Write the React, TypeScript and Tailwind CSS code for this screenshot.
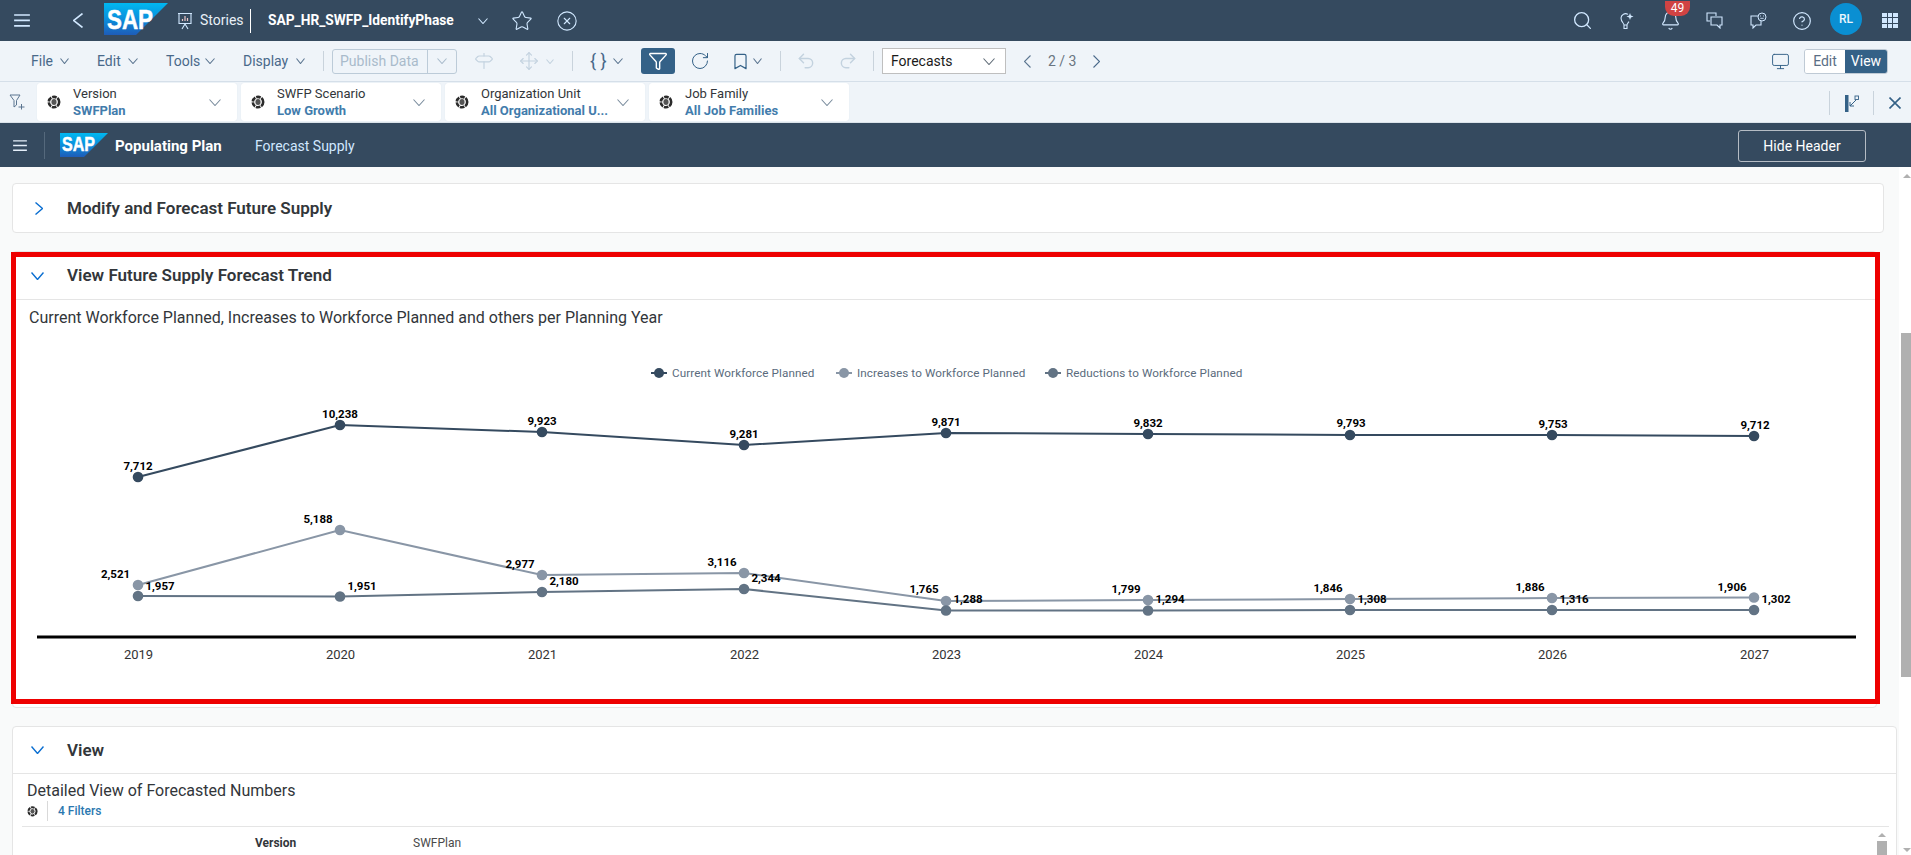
import React from "react";
import { Bell, Bookmark, CircleHelp, CircleX, Funnel, Monitor, Move, Redo2, RotateCw, Search, Signpost, Star, Undo2 } from "lucide-react";

const Chev = ({ dir = "down", color = "#5b7590", w = 10, h = 6, sw = 1.1 }: { dir?: "down" | "up" | "left" | "right"; color?: string; w?: number; h?: number; sw?: number }) => {
  const pts = dir === "down" ? `0.5,0.5 ${w / 2},${h - 0.5} ${w - 0.5},0.5` : dir === "left" ? `${w - 0.5},0.5 0.5,${h / 2} ${w - 0.5},${h - 0.5}` : dir === "right" ? `0.5,0.5 ${w - 0.5},${h / 2} 0.5,${h - 0.5}` : `0.5,${h - 0.5} ${w / 2},0.5 ${w - 0.5},${h - 0.5}`;
  return (
    <svg width={w} height={h} viewBox={`0 0 ${w} ${h}`} className="block">
      <polyline points={pts} fill="none" stroke={color} strokeWidth={sw} />
    </svg>
  );
};

const Burger = ({ w, color }: { w: number; color: string }) => (
  <svg width={w} height={w * 0.8} viewBox="0 0 16 13" className="block">
    <path d="M0 1h16M0 6.5h16M0 12h16" stroke={color} strokeWidth="1.7" />
  </svg>
);

const SapLogo = ({ w, h, size, tx, ty, tl }: { w: number; h: number; size: number; tx: number; ty: number; tl: number }) => (
  <svg width={w} height={h} viewBox={`0 0 ${w} ${h}`} className="block">
    <defs>
      <linearGradient id={`sap${w}`} x1="0" y1="0" x2="0" y2="1">
        <stop offset="0" stopColor="#00b8f1" />
        <stop offset="0.5" stopColor="#0a8fdc" />
        <stop offset="1" stopColor="#1e5cb8" />
      </linearGradient>
    </defs>
    <polygon points={`0,0 ${w},0 ${w / 2},${h} 0,${h}`} fill={`url(#sap${w})`} />
    <text x={tx} y={ty} fontFamily="Liberation Sans" fontWeight="700" fontSize={size} fill="#fff" stroke="#fff" strokeWidth="0.5" textLength={tl} lengthAdjust="spacingAndGlyphs">SAP</text>
  </svg>
);

const Dim = ({ s = 14 }: { s?: number }) => (
  <svg width={s} height={s * 1.15} viewBox="0 0 14 16" className="block">
    <circle cx="7" cy="8" r="5.2" fill="none" stroke="#2b2b2b" strokeWidth="2.6" strokeDasharray="4.6 0.9" />
    <ellipse cx="7" cy="8" rx="2.6" ry="3" fill="#555" />
  </svg>
);

const Token = ({ label, value }: { label: string; value: string }) => (
  <div className="flex h-[38px] w-[200px] shrink-0 items-center rounded-[3px] bg-white pl-[10px] pr-[16px] shadow-[0_0_1px_#d5dfe9]">
    <div className="w-[14px] shrink-0"><Dim /></div>
    <div className="ml-[12px] flex min-w-0 flex-1 flex-col">
      <span className="h-[16px] text-[13px] leading-[16px] whitespace-nowrap text-[#32363a]">{label}</span>
      <span className="h-[16px] translate-y-[0.5px] text-[13px] leading-[16px] font-bold whitespace-nowrap text-[#427cac]">{value}</span>
    </div>
    <Chev w={12} h={7} color="#7b8d9e" />
  </div>
);

const Sep = ({ cls }: { cls: string }) => <div className={`w-px shrink-0 bg-[#c9d3dc] ${cls}`} />;

const xs = [138, 340, 542, 744, 946, 1148, 1350, 1552, 1754];
const years = [2019, 2020, 2021, 2022, 2023, 2024, 2025, 2026, 2027];
const series = [
  { color: "#354a5f", ys: [477, 425, 432, 445, 433, 434, 435, 435, 436] },
  { color: "#8996a6", ys: [585, 530, 575, 573, 601, 600, 599, 598, 597.5] },
  { color: "#627384", ys: [596, 596.5, 592, 589, 610.5, 610.5, 610, 610, 610] },
];
const labels: [string, number, number][] = [
  ["7,712", 138, 466], ["10,238", 340, 414], ["9,923", 542, 421], ["9,281", 744, 434], ["9,871", 946, 422], ["9,832", 1148, 423], ["9,793", 1351, 423], ["9,753", 1553, 424], ["9,712", 1755, 425],
  ["2,521", 115.5, 574], ["5,188", 318, 519], ["2,977", 520, 564], ["3,116", 722, 562], ["1,765", 924, 589], ["1,799", 1126, 589], ["1,846", 1328, 588], ["1,886", 1530, 587], ["1,906", 1732, 587],
  ["1,957", 160, 586], ["1,951", 362, 586], ["2,180", 564, 581], ["2,344", 766, 578], ["1,288", 968, 599], ["1,294", 1170, 599], ["1,308", 1372, 599], ["1,316", 1574, 599], ["1,302", 1776, 599],
];
const legend = [
  { t: "Current Workforce Planned", mx: 659, tx: 672, c: "#354a5f" },
  { t: "Increases to Workforce Planned", mx: 844, tx: 857, c: "#8996a6" },
  { t: "Reductions to Workforce Planned", mx: 1053, tx: 1066, c: "#627384" },
];

const Chart = () => (
  <svg viewBox="13 340 1863 367" className="block h-[367px] w-[1863px]">
    {legend.map((l) => (
      <g key={l.t}>
        <line x1={l.mx - 8} x2={l.mx + 8} y1={373} y2={373} stroke={l.c} strokeWidth="2" />
        <circle cx={l.mx} cy={373} r="5" fill={l.c} />
        <text x={l.tx} y={377} fontFamily="Roboto" fontSize="11.7" letterSpacing="0.1" fill="#5a6b7c">{l.t}</text>
      </g>
    ))}
    {series.map((s) => (
      <g key={s.color}>
        <polyline points={s.ys.map((y, i) => `${xs[i]},${y}`).join(" ")} fill="none" stroke={s.color} strokeWidth="2" />
        {s.ys.map((y, i) => <circle key={i} cx={xs[i]} cy={y} r="5.3" fill={s.color} />)}
      </g>
    ))}
    <rect x="37" y="635.5" width="1819" height="3" fill="#000" />
    {years.map((y, i) => (
      <text key={y} x={xs[i] + 0.5} y={658.5} textAnchor="middle" fontFamily="Roboto" fontSize="13" fill="#333">{y}</text>
    ))}
    {labels.map(([t, x, y]) => (
      <text key={t + x} x={x} y={y + 4} textAnchor="middle" fontFamily="Roboto" fontWeight="700" fontSize="11.5" fill="#000">{t}</text>
    ))}
  </svg>
);

export default function App() {
  const shell = "#d1e8ff";
  const tool = "#346187";
  const dis = "#c3d2df";
  return (
    <div className="flex h-[855px] w-[1911px] flex-col overflow-hidden bg-white font-['Roboto',sans-serif]">
      {/* shell bar */}
      <div className="flex h-[41px] shrink-0 items-center overflow-hidden bg-[#354a5f] text-white">
        <div className="ml-[14px] w-[16px] shrink-0"><Burger w={16} color={shell} /></div>
        <div className="ml-[43px] w-[10px] shrink-0"><Chev dir="left" w={10} h={15} color={shell} sw={1.6} /></div>
        <div className="mb-[3px] ml-[21px] w-[64px] shrink-0"><SapLogo w={64} h={32} size={28} tx={3} ty={26} tl={46} /></div>
        <div className="ml-[9px] w-[16px] shrink-0">
          <svg width="16" height="18" viewBox="0 0 16 18" className="block">
            <path d="M1 1.5h14M2 1.5v10h12v-10M5 17l3-5 3 5" fill="none" stroke={shell} strokeWidth="1.1" />
            <path d="M5.5 9V7M8 9V4M10.5 9V6" stroke="#e9c7c7" strokeWidth="1.2" />
          </svg>
        </div>
        <div className="ml-[7px] w-[42px] shrink-0 text-[14px] whitespace-nowrap text-[#e8f0f7]">Stories</div>
        <div className="ml-[8px] h-[24px] w-px shrink-0 bg-white" />
        <div className="ml-[17px] w-[201px] shrink-0 text-[13.750px] font-bold whitespace-nowrap">SAP_HR_SWFP_IdentifyPhase</div>
        <div className="ml-[9px] w-[10px] shrink-0"><Chev w={10} h={6} color={shell} /></div>
        <div className="ml-[25px] w-[18px] shrink-0"><Star size={22} strokeWidth={1.2} color={shell} className="m-[-2px]" /></div>
        <div className="ml-[27px] w-[18px] shrink-0"><CircleX size={22} strokeWidth={1.2} color={shell} className="m-[-2px]" /></div>
        <div className="ml-auto w-[16px] shrink-0"><Search size={21} strokeWidth={1.5} color={shell} className="m-[-2.500px]" /></div>
        <div className="ml-[28px] w-[15px] shrink-0">
          <svg width="16" height="18" viewBox="0 0 16 18" className="block">
            <path d="M6 13c0-2-3-3-3-7a4.5 4.5 0 0 1 7-3.6M9 13c0-1 1-2 2-3.300M6 13h3v3.500H6z" fill="none" stroke={shell} strokeWidth="1.1" />
            <path d="M12 1l.9 2.600L15.500 4.500l-2.600.9L12 8l-.9-2.600L8.500 4.500l2.600-.9z" fill={shell} />
          </svg>
        </div>
        <div className="relative ml-[29px] w-[16px] shrink-0">
          <Bell size={21} strokeWidth={1.3} color={shell} className="m-[-2.500px]" />
          <div className="absolute top-[-12px] left-[3px] flex h-[15px] w-[25px] items-center justify-center rounded-b-[9px] bg-[#d04343] text-[12px] leading-none text-white">49</div>
        </div>
        <div className="ml-[28px] w-[17px] shrink-0">
          <svg width="17" height="17" viewBox="0 0 17 17" className="block">
            <path d="M10 4V1H1v8h3" fill="none" stroke={shell} strokeWidth="1.1" />
            <path d="M5 5h11v8h-2v3l-3-3H5z" fill="none" stroke={shell} strokeWidth="1.1" />
          </svg>
        </div>
        <div className="ml-[27px] w-[16px] shrink-0">
          <svg width="17" height="17" viewBox="0 0 17 17" className="block">
            <path d="M8 4H1v9h2v3l3-3h5V9" fill="none" stroke={shell} strokeWidth="1.1" />
            <circle cx="12" cy="5" r="4" fill="none" stroke={shell} strokeWidth="1" />
            <path d="M10 4h1M13 4h1M10.300 6.300h3.400" stroke={shell} strokeWidth="0.9" />
          </svg>
        </div>
        <div className="ml-[28px] w-[16px] shrink-0"><CircleHelp size={20} strokeWidth={1.4} color={shell} className="m-[-2px]" /></div>
        <div className="mb-[3px] ml-[20px] flex h-[32px] w-[32px] shrink-0 items-center justify-center rounded-full bg-[#0a8fd2] text-[12px] font-medium text-[#eaf6fd]">RL</div>
        <div className="mr-[13px] ml-[20px] grid w-[16px] shrink-0 grid-cols-3 gap-px">
          {Array.from({ length: 9 }).map((_, i) => <div key={i} className="h-[4.500px] bg-[#d1e8ff]" />)}
        </div>
      </div>

      {/* tool bar */}
      <div className="flex h-[41px] shrink-0 items-center border-b border-[#d5dfe9] bg-[#eff4f9] text-[14px] text-[#49698a]">
        <div className="ml-[31px] w-[21px] shrink-0">File</div>
        <div className="ml-[8px] w-[9px] shrink-0"><Chev w={9} /></div>
        <div className="ml-[28px] w-[23px] shrink-0">Edit</div>
        <div className="ml-[8px] w-[10px] shrink-0"><Chev /></div>
        <div className="ml-[28px] w-[32px] shrink-0">Tools</div>
        <div className="ml-[7px] w-[10px] shrink-0"><Chev /></div>
        <div className="ml-[28px] w-[45px] shrink-0">Display</div>
        <div className="ml-[8px] w-[9px] shrink-0"><Chev w={9} /></div>
        <Sep cls="ml-[18px] h-[20px]" />
        <div className="ml-[8px] flex h-[25px] w-[125px] shrink-0 rounded-[3px] border border-[#bccbd8] text-[14px] text-[#a9bbcb]">
          <div className="flex w-[94px] items-center pl-[7px] whitespace-nowrap">Publish Data</div>
          <div className="flex flex-1 items-center justify-center border-l border-[#bccbd8]"><Chev w={10} color="#a9bbcb" /></div>
        </div>
        <div className="ml-[18px] w-[17px] shrink-0"><Signpost size={20} strokeWidth={1.4} color={dis} className="m-[-1.500px]" /></div>
        <div className="ml-[28px] w-[17px] shrink-0"><Move size={20} strokeWidth={1.4} color={dis} className="m-[-1.500px]" /></div>
        <div className="ml-[9px] w-[8px] shrink-0"><Chev w={8} h={5} color={dis} /></div>
        <Sep cls="ml-[18px] h-[20px]" />
        <div className="ml-[17px] w-[16px] shrink-0 text-center text-[18px] leading-none whitespace-nowrap text-[#49698a]">{"{ }"}</div>
        <div className="ml-[7px] w-[10px] shrink-0"><Chev /></div>
        <div className="ml-[18px] flex h-[26px] w-[34px] shrink-0 items-center justify-center rounded-[3px] bg-[#346187]"><Funnel size={20} strokeWidth={1.7} color="#fff" /></div>
        <div className="ml-[17px] w-[15px] shrink-0"><RotateCw size={20} strokeWidth={1.2} color={tool} className="m-[-2.500px]" /></div>
        <div className="ml-[28px] w-[10px] shrink-0"><Bookmark size={19} strokeWidth={1.5} color={tool} className="m-[-4.500px]" /></div>
        <div className="ml-[8px] w-[9px] shrink-0"><Chev w={9} /></div>
        <Sep cls="ml-[18px] h-[20px]" />
        <div className="ml-[17px] w-[15px] shrink-0"><Undo2 size={20} strokeWidth={1.7} color={dis} className="m-[-2.500px]" /></div>
        <div className="ml-[28px] w-[14px] shrink-0"><Redo2 size={20} strokeWidth={1.7} color={dis} className="m-[-3px]" /></div>
        <Sep cls="ml-[18px] h-[20px]" />
        <div className="ml-[8px] flex h-[26px] w-[124px] shrink-0 items-center justify-between border border-[#bfbfbf] bg-white pr-[10px] pl-[8px] text-[14px] text-[#1a1a1a]">
          <span>Forecasts</span><Chev w={12} h={7} color="#5f6b76" />
        </div>
        <div className="ml-[18px] w-[6px] shrink-0"><Chev dir="left" w={7} h={13} color="#5b7590" /></div>
        <div className="ml-[18px] w-[27px] shrink-0 text-center text-[14px] whitespace-nowrap text-[#6a7580]">2 / 3</div>
        <div className="ml-[18px] w-[7px] shrink-0"><Chev dir="right" w={7} h={13} color="#49698a" /></div>
        <div className="ml-auto w-[16px] shrink-0"><Monitor size={19} strokeWidth={1.2} color={tool} className="m-[-1.500px]" /></div>
        <div className="mr-[23px] ml-[16px] flex h-[25px] w-[84px] shrink-0 overflow-hidden rounded-[3px] border border-[#bfcad5]">
          <div className="flex w-[40px] items-center justify-center bg-white text-[14px] text-[#5a6e85]">Edit</div>
          <div className="flex flex-1 items-center justify-center bg-[#346187] text-[14px] text-white">View</div>
        </div>
      </div>

      {/* filter bar */}
      <div className="flex h-[41px] shrink-0 items-start border-b border-[#dbe3ea] bg-[#eff4f9] pt-px">
        <div className="mt-[11px] ml-[9px] w-[16px] shrink-0">
          <svg width="17" height="16" viewBox="0 0 17 16" className="block">
            <path d="M1 1h10L7.500 6.500V11L5 13V6.500z" fill="none" stroke="#5b7590" strokeWidth="1" />
            <path d="M12.500 10v5.500M9.500 13h6" stroke="#5b7590" strokeWidth="1" />
          </svg>
        </div>
        <div className="ml-[12px] flex shrink-0 gap-[4px]">
          <Token label="Version" value="SWFPlan" />
          <Token label="SWFP Scenario" value="Low Growth" />
          <Token label="Organization Unit" value="All Organizational U..." />
          <Token label="Job Family" value="All Job Families" />
        </div>
        <Sep cls="mt-[8px] ml-auto h-[24px]" />
        <div className="mt-[12px] ml-[15px] w-[15px] shrink-0">
          <svg width="15" height="17" viewBox="0 0 15 17" className="block">
            <rect x="0" y="0" width="3.500" height="17" fill="#346187" />
            <path d="M11 5L5 11M5 7v4h4" fill="none" stroke="#346187" strokeWidth="1" />
            <rect x="10" y="1" width="3.500" height="3.500" fill="none" stroke="#346187" strokeWidth="0.9" />
          </svg>
        </div>
        <Sep cls="mt-[8px] ml-[13px] h-[24px]" />
        <div className="mt-[14px] mr-[10px] ml-[15px] w-[12px] shrink-0">
          <svg width="12" height="12" viewBox="0 0 12 12" className="block">
            <path d="M0.500 0.500L11.500 11.500M11.500 0.500L0.500 11.500" stroke="#346187" strokeWidth="1.6" />
          </svg>
        </div>
      </div>

      {/* application header */}
      <div className="flex h-[44px] shrink-0 items-center bg-[#354a5f] pt-[2px] text-[14px] text-white">
        <div className="ml-[13px] w-[14px] shrink-0"><Burger w={14} color="#e5effa" /></div>
        <div className="mb-[2px] ml-[17px] h-[27px] w-px shrink-0 bg-[#55697c]" />
        <div className="mb-[2px] ml-[15px] w-[48px] shrink-0"><SapLogo w={48} h={24} size={20} tx={2} ty={18} tl={33} /></div>
        <div className="ml-[7px] w-[106px] shrink-0 text-[15px] font-bold whitespace-nowrap">Populating Plan</div>
        <div className="ml-[34px] whitespace-nowrap text-[#d1e8ff]">Forecast Supply</div>
        <div className="mr-[45px] ml-auto flex h-[32px] w-[128px] items-center justify-center rounded-[3px] border border-[#b5bcc4] text-[14px] text-white">Hide Header</div>
      </div>

      {/* page */}
      <div className="flex min-h-0 flex-1">
        <div className="relative flex w-[1899px] shrink-0 flex-col gap-[18px] overflow-hidden bg-[#f9fafa] pt-[16px] pl-[12px]">
          <div className="flex h-[50px] w-[1872px] shrink-0 items-center rounded-[4px] border border-[#e5e5e5] bg-white">
            <div className="ml-[22px] w-[8px] shrink-0"><Chev dir="right" w={8} h={13} color="#0a6ed1" sw={1.4} /></div>
            <div className="ml-[24px] pt-[1px] text-[17px] font-semibold whitespace-nowrap text-[#32363a]">Modify and Forecast Future Supply</div>
          </div>

          <div className="w-[1865px] shrink-0 rounded-[4px] border border-[#e5e5e5] bg-white">
            <div className="flex h-[48px] items-center border-b border-[#e5e5e5]">
              <div className="ml-[18px] w-[13px] shrink-0"><Chev w={13} h={8} color="#0a6ed1" sw={1.4} /></div>
              <div className="ml-[23px] text-[17px] font-semibold whitespace-nowrap text-[#32363a]">View Future Supply Forecast Trend</div>
            </div>
            <div className="h-[40px] pt-[8px] pl-[16px] text-[16px] leading-[20px] whitespace-nowrap text-[#32363a]">Current Workforce Planned, Increases to Workforce Planned and others per Planning Year</div>
            <Chart />
          </div>

          <div className="h-[140px] w-[1885px] shrink-0 rounded-t-[4px] border border-[#e5e5e5] bg-white">
            <div className="flex h-[47px] items-center border-b border-[#e5e5e5]">
              <div className="ml-[18px] w-[13px] shrink-0"><Chev w={13} h={8} color="#0a6ed1" sw={1.4} /></div>
              <div className="ml-[23px] pt-[1px] text-[17px] font-semibold text-[#32363a]">View</div>
            </div>
            <div className="mt-[7px] pl-[14px] text-[16px] leading-[20px] whitespace-nowrap text-[#32363a]">Detailed View of Forecasted Numbers</div>
            <div className="flex h-[20px] items-center pl-[14px]">
              <div className="w-[11px] shrink-0"><Dim s={11} /></div>
              <div className="ml-[9px] h-[20px] w-px shrink-0 bg-[#d9d9d9]" />
              <div className="ml-[10px] text-[12px] font-medium text-[#2b78b0]">4 Filters</div>
            </div>
            <div className="mt-[5px] ml-[9px] h-px w-[1867px] bg-[#e5e5e5]" />
            <div className="relative flex h-[32px] items-center text-[12px]">
              <div className="ml-[242px] w-[42px] font-bold whitespace-nowrap text-[#32363a]">Version</div>
              <div className="ml-[116px] whitespace-nowrap text-[#4a4a4a]">SWFPlan</div>
              <div className="absolute top-[6px] left-[1864px] flex w-[10px] flex-col items-center">
                <div className="h-0 w-0 border-x-[4px] border-b-[4px] border-x-transparent border-b-[#b0b0b0]" />
                <div className="mt-[4px] h-[20px] w-[10px] bg-[#b0b0b0]" />
              </div>
            </div>
          </div>

          <div className="pointer-events-none absolute top-[85px] left-[11px] h-[452px] w-[1869px] border-[5px] border-[#ee0000]" />
        </div>
        <div className="relative w-[12px] shrink-0 bg-white">
          <div className="absolute top-[7px] left-[4px] h-0 w-0 border-x-[4px] border-b-[4px] border-x-transparent border-b-[#b0b0b0]" />
          <div className="absolute top-[166px] right-0 h-[344px] w-[10px] bg-[#b0b0b0]" />
          <div className="absolute bottom-[3px] left-[4px] h-0 w-0 border-x-[4px] border-t-[4px] border-x-transparent border-t-[#b0b0b0]" />
        </div>
      </div>
    </div>
  );
}
